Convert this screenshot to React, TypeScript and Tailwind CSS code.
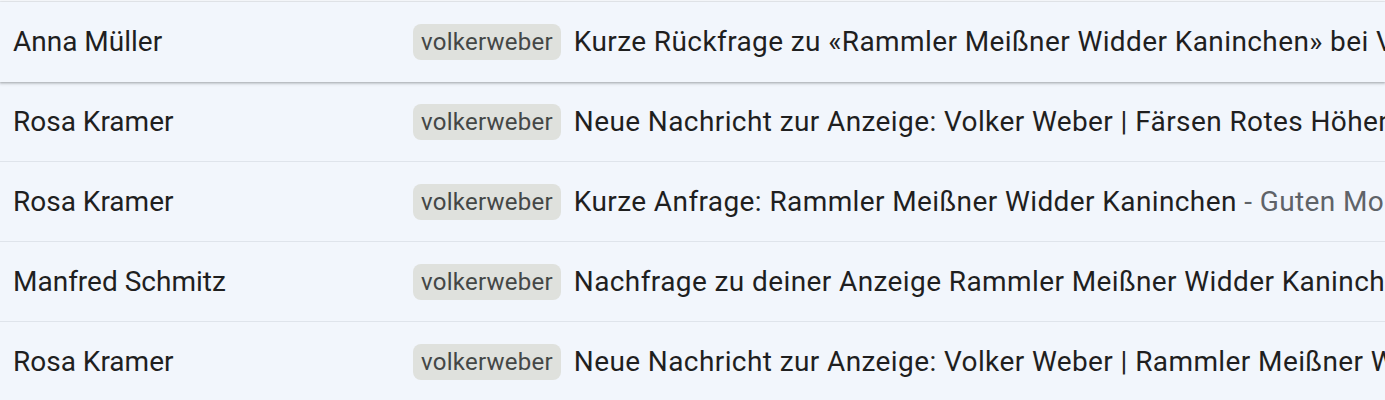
const rows = [
  {
    sender: 'Anna Müller',
    subject: 'Kurze Rückfrage zu «Rammler Meißner Widder Kaninchen» bei Volker Weber',
    snippet: '',
    hover: true,
  },
  {
    sender: 'Rosa Kramer',
    subject: 'Neue Nachricht zur Anzeige: Volker Weber | Färsen Rotes Höhenvieh',
    snippet: '',
  },
  {
    sender: 'Rosa Kramer',
    subject: 'Kurze Anfrage: Rammler Meißner Widder Kaninchen',
    snippet: 'Guten Morgen, ich hätte eine Frage zu Ihrer Anzeige',
  },
  {
    sender: 'Manfred Schmitz',
    subject: 'Nachfrage zu deiner Anzeige Rammler Meißner Widder Kaninchen',
    snippet: '',
  },
  {
    sender: 'Rosa Kramer',
    subject: 'Neue Nachricht zur Anzeige: Volker Weber | Rammler Meißner Widder Kaninchen',
    snippet: '',
  },
]

function Row({ sender, subject, snippet, hover }: { sender: string; subject: string; snippet: string; hover?: boolean }) {
  return (
    <div
      className={
        'relative flex h-20 shrink-0 items-center bg-[#f2f6fc] ' +
        (hover
          ? 'z-10 shadow-[0_1px_2px_0_rgba(60,64,67,0.3),0_1px_3px_1px_rgba(60,64,67,0.15)]'
          : 'border-b border-[#dfe4eb]')
      }
    >
      <div className="w-[413px] shrink-0 truncate pl-[13px] text-[28px] text-[#1f1f1f]">{sender}</div>
      <div className="flex min-w-0 flex-1 items-center overflow-hidden whitespace-nowrap tracking-[0.4px]">
        <span className="mr-[13px] shrink-0 rounded-lg bg-[#dfe1dd] px-2 text-[24px] leading-9 tracking-[0.25px] text-[#444746]">
          volkerweber
        </span>
        <span className="text-[28px] text-[#1f1f1f]">{subject}</span>
        {snippet && <span className="text-[28px] text-[#5f6368]">&nbsp;- {snippet}</span>}
      </div>
    </div>
  )
}

export default function App() {
  return (
    <div className="flex h-[400px] w-full flex-col overflow-hidden bg-[#f2f6fc] font-['Roboto',sans-serif]">
      <div className="h-[2px] shrink-0 border-b border-[#eef1f5] bg-[#f8fafd]" />
      {rows.map((r, i) => (
        <Row key={i} {...r} />
      ))}
    </div>
  )
}
